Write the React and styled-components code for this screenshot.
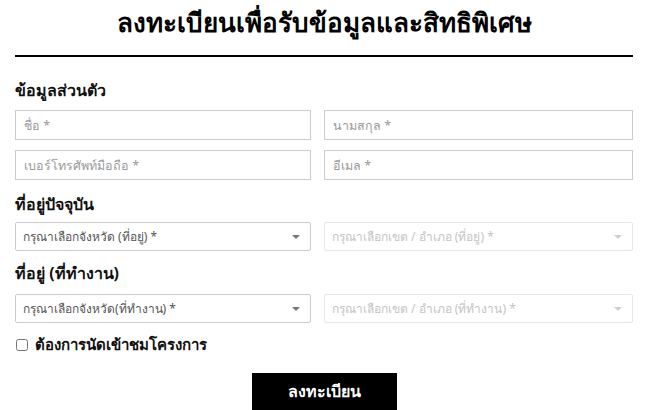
import React from "react";
import styled, { createGlobalStyle } from "styled-components";

const GlobalStyle = createGlobalStyle`
  body {
    margin: 0;
    background: #fff;
    font-family: "Noto Sans", "DejaVu Sans", sans-serif;
    color: #111;
  }
`;

const Page = styled.div`
  width: 650px;
  padding: 0 17px 0 15px;
  box-sizing: border-box;
`;

const Title = styled.h1`
  margin: 0;
  padding-top: 3px;
  height: 52px;
  line-height: 38px;
  text-align: center;
  font-size: 26px;
  font-weight: 700;
  color: #000;
`;

const Divider = styled.hr`
  margin: 0;
  border: none;
  height: 2px;
  background: #000;
`;

const SectionTitle = styled.h3`
  margin: ${(p) => p.$top}px 0 ${(p) => p.$bottom}px;
  font-size: 16px;
  line-height: 22px;
  font-weight: 700;
  color: #111;
`;

const Grid = styled.div`
  display: grid;
  grid-template-columns: 296px 1fr;
  column-gap: 13px;
  row-gap: 10px;
`;

const Input = styled.input`
  box-sizing: border-box;
  height: 30px;
  width: 100%;
  padding: 0 8px;
  border: 1px solid #cccccc;
  border-radius: 0;
  font-family: inherit;
  font-size: 12.5px;
  color: #555;
  outline: none;

  &::placeholder {
    color: #9a9a9a;
  }
`;

const SelectBox = styled.div`
  box-sizing: border-box;
  height: 29px;
  display: flex;
  align-items: center;
  justify-content: space-between;
  padding: 0 10px 0 7px;
  border: 1px solid ${(p) => (p.$disabled ? "#e6e6e6" : "#cccccc")};
  border-radius: 2px;
  font-size: 12px;
  color: ${(p) => (p.$disabled ? "#c4c4c4" : "#555")};
  background: #fff;
`;

const Caret = styled.span`
  width: 0;
  height: 0;
  border-left: 4px solid transparent;
  border-right: 4px solid transparent;
  border-top: 4px solid ${(p) => (p.$disabled ? "#cfcfcf" : "#777")};
`;

const CheckRow = styled.label`
  display: flex;
  align-items: center;
  gap: 7px;
  margin-top: 12px;
  height: 20px;
  font-size: 15px;
  font-weight: 700;
  color: #111;

  input {
    margin: 0 0 0 1px;
    width: 12px;
    height: 12px;
  }
`;

const ButtonWrap = styled.div`
  display: flex;
  justify-content: center;
  margin-top: 18px;
`;

const Submit = styled.button`
  width: 145px;
  height: 37px;
  border: none;
  background: #000;
  color: #fff;
  font-family: inherit;
  font-size: 16px;
  font-weight: 700;
  cursor: pointer;
`;

const Select = ({ label, disabled }) => (
  <SelectBox $disabled={disabled}>
    <span>{label}</span>
    <Caret $disabled={disabled} />
  </SelectBox>
);

export default function App() {
  return (
    <Page>
      <GlobalStyle />
      <Title>ลงทะเบียนเพื่อรับข้อมูลและสิทธิพิเศษ</Title>
      <Divider />

      <SectionTitle $top={22} $bottom={9}>ข้อมูลส่วนตัว</SectionTitle>
      <Grid>
        <Input placeholder="ชื่อ *" />
        <Input placeholder="นามสกุล *" />
        <Input placeholder="เบอร์โทรศัพท์มือถือ *" />
        <Input placeholder="อีเมล *" />
      </Grid>

      <SectionTitle $top={13} $bottom={7}>ที่อยู่ปัจจุบัน</SectionTitle>
      <Grid>
        <Select label="กรุณาเลือกจังหวัด (ที่อยู่) *" />
        <Select label="กรุณาเลือกเขต / อำเภอ (ที่อยู่) *" disabled />
      </Grid>

      <SectionTitle $top={11} $bottom={10}>ที่อยู่ (ที่ทำงาน)</SectionTitle>
      <Grid>
        <Select label="กรุณาเลือกจังหวัด(ที่ทำงาน) *" />
        <Select label="กรุณาเลือกเขต / อำเภอ (ที่ทำงาน) *" disabled />
      </Grid>

      <CheckRow>
        <input type="checkbox" />
        ต้องการนัดเข้าชมโครงการ
      </CheckRow>

      <ButtonWrap>
        <Submit>ลงทะเบียน</Submit>
      </ButtonWrap>
    </Page>
  );
}
